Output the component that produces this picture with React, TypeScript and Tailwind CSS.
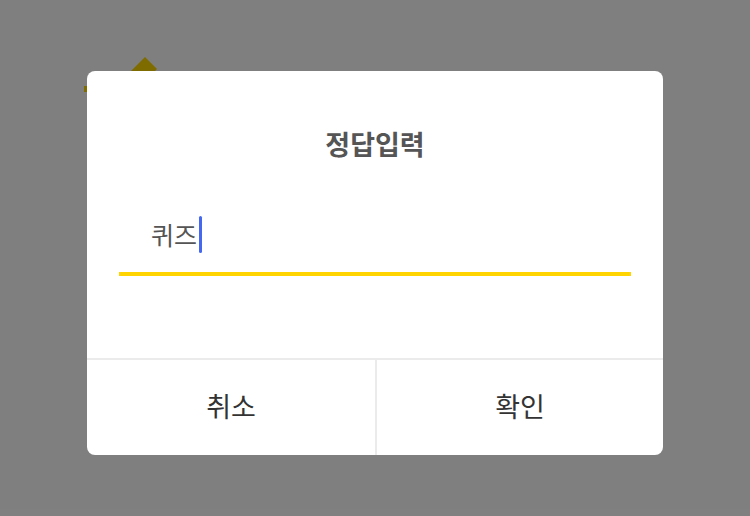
export default function App() {
  return (
    <div className="relative h-[516px] w-[750px] overflow-hidden bg-white font-['Noto_Sans_CJK_KR','Noto_Sans',sans-serif]">
      {/* page behind the modal */}
      <svg className="absolute left-0 top-0" width="750" height="516" viewBox="0 0 750 516">
        <polygon points="145,57 157,69 101,125 89,113" fill="#ffd800" />
        <polygon points="84,86 88,86 88,92 84,92" fill="#ffd800" />
      </svg>

      <div className="absolute inset-0 bg-black/50">
        <div className="mx-auto mt-[71px] w-[576px] overflow-hidden rounded-lg bg-white">
          <div className="pt-[55px] text-center text-[27px] font-bold leading-[36px] text-[#555555]">
            정답입력
          </div>

          <div className="mx-8 mt-[52px] border-b-4 border-[#ffd400] pb-[18px] pl-8">
            <div className="flex h-10 items-center text-[25px] leading-10 text-[#555555]">
              <span>퀴즈</span>
              <span className="ml-[2px] inline-block h-[37px] w-[3px] rounded-sm bg-[#4468f0]" />
            </div>
          </div>

          <div className="mt-[82px] grid h-[97px] grid-cols-2 border-t-2 border-[#ebebeb]">
            <button
              type="button"
              className="flex items-center justify-center pb-[2px] text-[27px] text-[#333333]"
            >
              취소
            </button>
            <button
              type="button"
              className="flex items-center justify-center border-l-2 border-[#ebebeb] pb-[2px] text-[27px] text-[#333333]"
            >
              확인
            </button>
          </div>
        </div>
      </div>
    </div>
  );
}
